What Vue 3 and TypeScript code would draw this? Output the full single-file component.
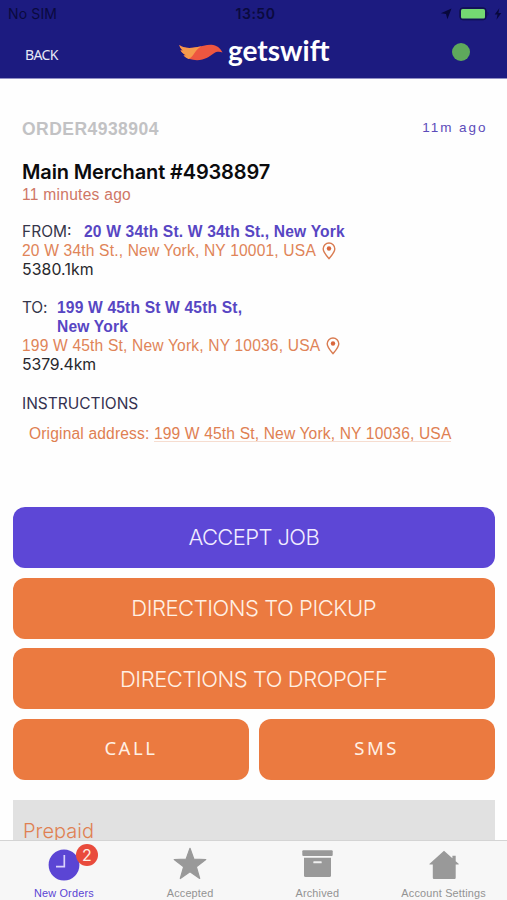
<script setup lang="ts">
interface Tab {
  id: 'new' | 'accepted' | 'archived' | 'account'
  label: string
  badge?: number
}

const tabs: Tab[] = [
  { id: 'new', label: 'New Orders', badge: 2 },
  { id: 'accepted', label: 'Accepted' },
  { id: 'archived', label: 'Archived' },
  { id: 'account', label: 'Account Settings' },
]
</script>

<template>
  <div class="phone">
    <header class="header">
      <div class="status">
        <span class="carrier">No SIM</span>
        <span class="clock">13:50</span>
        <div class="indicators">
          <svg class="locate" viewBox="0 0 12 12"><path d="M11.500.5 7.400 11.300 6 6.100.8 5.200z" fill="#08083c" /></svg>
          <svg class="battery" viewBox="0 0 30 14">
            <rect x=".8" y=".8" width="26.400" height="12" rx="3" fill="#15155c" stroke="#10104c" />
            <rect x="2" y="2" width="24" height="9.600" rx="1.600" fill="#74d972" />
            <path d="M28.600 4.600c1 .6 1 3.800 0 4.400z" fill="#10104c" />
          </svg>
          <svg class="bolt" viewBox="0 0 8 12"><path d="M5.300.3.7 6.600h2.800L2.500 11.700 7.300 5H4.400z" fill="#08083c" /></svg>
        </div>
      </div>
      <div class="nav">
        <span class="back">BACK</span>
        <div class="brand">
          <svg class="wing" viewBox="0 0 44 17">
            <path d="M.3 1C5 4.500 11 4.300 17 3.300 23 2.300 27 .5 32.500.7 37.500 1 41.500 4 43.500 8.600 40.500 7.400 37.500 7.700 35 9.300 30 12.600 26 16.200 18 16.200 12.500 16.200 8 14.600 4.500 11.600L7 11.300C4.500 10 2.500 8.300 1.500 6.200L3.800 6.700C2 5 .8 3 .3 1z" fill="#ee5640" />
            <path d="M.3 1C5 4.500 11 4.300 17 3.300 19.500 3 21 2.700 22.500 2.300 18.500 4.300 16.500 7.500 14.500 10.500 13 12.700 11.500 14 9.500 14.900 7.500 14.100 6 13 4.500 11.600L7 11.300C4.500 10 2.500 8.300 1.500 6.200L3.800 6.700C2 5 .8 3 .3 1z" fill="#f59a4c" />
          </svg>
          <span class="wordmark">getswift</span>
        </div>
        <span class="online"></span>
      </div>
    </header>

    <main class="content">
      <section class="details">
        <div class="order-row">
          <span class="order">ORDER4938904</span>
          <span class="age">11m ago</span>
        </div>
        <h1 class="merchant">Main Merchant #4938897</h1>
        <p class="ago">11 minutes ago</p>

        <div class="stop">
          <div class="stop-head">
            <span class="label from">FROM:</span>
            <strong class="place">20 W 34th St. W 34th St., New York</strong>
          </div>
          <div class="address">
            <span>20 W 34th St., New York, NY 10001, USA</span>
            <svg class="pin" viewBox="0 0 14 18"><path d="M7 1a5.800 5.800 0 0 0-5.800 5.800C1.200 10.300 4.500 13.700 7 16.600c2.500-2.900 5.800-6.300 5.800-9.800A5.800 5.800 0 0 0 7 1z" fill="none" stroke="#d97b50" stroke-width="1.400" /><circle cx="7" cy="6.500" r="2.200" fill="#d9663c" /></svg>
          </div>
          <p class="distance">5380.1km</p>
        </div>

        <div class="stop">
          <div class="stop-head">
            <span class="label to">TO:</span>
            <strong class="place">199 W 45th St W 45th St,<br />New York</strong>
          </div>
          <div class="address">
            <span>199 W 45th St, New York, NY 10036, USA</span>
            <svg class="pin" viewBox="0 0 14 18"><path d="M7 1a5.800 5.800 0 0 0-5.800 5.800C1.200 10.300 4.500 13.700 7 16.600c2.500-2.900 5.800-6.300 5.800-9.800A5.800 5.800 0 0 0 7 1z" fill="none" stroke="#d97b50" stroke-width="1.400" /><circle cx="7" cy="6.500" r="2.200" fill="#d9663c" /></svg>
          </div>
          <p class="distance second">5379.4km</p>
        </div>

        <h2 class="instructions">INSTRUCTIONS</h2>
        <p class="note">Original address: <span class="link">199 W 45th St, New York, NY 10036, USA</span></p>
      </section>

      <section class="actions">
        <button class="btn accept">ACCEPT JOB</button>
        <button class="btn">DIRECTIONS TO PICKUP</button>
        <button class="btn dropoff">DIRECTIONS TO DROPOFF</button>
        <div class="pair">
          <button class="btn small">CALL</button>
          <button class="btn small">SMS</button>
        </div>
      </section>

      <section class="payment"><span class="prepaid">Prepaid</span></section>
    </main>

    <nav class="tabs">
      <div v-for="tab in tabs" :key="tab.id" class="tab" :class="tab.id">
        <div class="icon">
          <svg v-if="tab.id === 'new'" width="32" height="32" viewBox="0 0 32 32">
            <circle cx="16" cy="16" r="15.400" fill="#5b45d4" />
            <path d="M16.300 6v11.600H8" fill="none" stroke="#d9d1fb" stroke-width="1.700" />
          </svg>
          <svg v-else-if="tab.id === 'accepted'" width="34" height="33" viewBox="0 0 34 33">
            <path d="m17 1.300 3.900 10.900 11.900.3-9.400 7.300 3.300 11.700L17 24.800 7.300 31.500l3.300-11.700-9.400-7.300 11.900-.3z" fill="#999" stroke="#999" stroke-width="1.200" stroke-linejoin="round" />
          </svg>
          <svg v-else-if="tab.id === 'archived'" width="31" height="28" viewBox="0 0 31 28">
            <rect x=".3" y=".3" width="30.400" height="5.700" rx="1" fill="#999" />
            <path d="M2 7.800h27v17.700a1.500 1.500 0 0 1-1.500 1.500h-24A1.500 1.500 0 0 1 2 25.500z" fill="#999" />
            <rect x="11.300" y="11.300" width="8.400" height="2" rx=".6" fill="#f0f0f0" />
          </svg>
          <svg v-else width="30" height="30" viewBox="0 0 30 30">
            <path d="M15 .8.600 13.700c-.4.500-.2.800.4.800h2.800v13c0 1 .5 1.500 1.500 1.500h19.900c1 0 1.500-.5 1.500-1.500v-13h2.500c.6 0 .8-.3.400-.8l-2.900-2.500V5.800h-3.300v2.500z" fill="#999" />
          </svg>
          <span v-if="tab.badge" class="badge">{{ tab.badge }}</span>
        </div>
        <span class="tab-label">{{ tab.label }}</span>
      </div>
    </nav>
  </div>
</template>

<style>
body { background: #fff; }
</style>

<style scoped>
* { box-sizing: border-box; }
.phone {
  width: 507px;
  height: 900px;
  display: flex;
  flex-direction: column;
  overflow: hidden;
  background: #fefefe;
  font-family: "Liberation Sans", Arial, sans-serif;
  white-space: nowrap;
}
h1, h2, p { margin: 0; font-weight: 400; }
svg { display: block; flex: none; }

.header {
  flex: none;
  height: 79px;
  background: #1c1b80;
  border-bottom: 1px solid #9190c4;
}
.status {
  height: 28px;
  padding: 0 4px 0 8px;
  display: grid;
  grid-template-columns: 1fr auto 1fr;
  align-items: center;
  font: 14px/28px Inter, sans-serif;
  color: #0a0a3e;
}
.carrier { letter-spacing: 0.15px; }
.clock { font-weight: 600; letter-spacing: 0.5px; }
.indicators { display: flex; justify-content: flex-end; align-items: center; margin-right: 1px; }
.locate { width: 12px; height: 12px; margin-right: 7px; }
.battery { width: 30px; height: 14px; margin-right: 5px; }
.bolt { width: 8px; height: 12px; }
.nav {
  height: 50px;
  padding: 0 37px 0 25px;
  display: grid;
  grid-template-columns: 154px 1fr auto;
  align-items: center;
}
.back { padding-top: 4px; font: 14px/20px "Noto Sans", sans-serif; letter-spacing: -0.600px; color: #e8e8f6; }
.brand { display: flex; align-items: center; }
.wing { width: 44px; height: 17px; margin: 0 5px 2px 0; }
.wordmark { font: 700 28px/40px Lato, sans-serif; color: #fff; height: 46px; }
.online { width: 18px; height: 18px; border-radius: 50%; background: #5ea95c; margin-bottom: 3px; }

.content { flex: 1; min-height: 0; overflow: hidden; padding: 40px 12.5px 0 13px; }
.details { height: 387.600px; padding: 0 8px 0 9px; font-size: 15.600px; line-height: 19px; letter-spacing: 0.170px; color: #28282c; }
.order-row { display: flex; justify-content: space-between; height: 20px; }
.order { font-weight: 700; font-size: 17.500px; line-height: 21px; letter-spacing: 0.460px; color: #c2c2c4; }
.age { margin-right: -1px; font-size: 13.500px; line-height: 18px; letter-spacing: 1.950px; color: #5c4cba; }
.merchant { margin-top: 20px; font: 600 20px/26px Inter, sans-serif; letter-spacing: -0.140px; color: #0b0b0d; }
.ago { line-height: 20px; letter-spacing: 0.250px; color: #cf7665; }
.stop { margin-top: 17px; }
.stop + .stop { margin-top: 19px; }
.stop-head { display: flex; align-items: flex-start; }
.label { font-family: Inter, sans-serif; font-size: 15.500px; letter-spacing: 0; color: #36364a; }
.from { width: 62px; }
.to { width: 35px; letter-spacing: -0.200px; }
.place { color: #5746c3; }
.address { display: flex; align-items: center; height: 19px; color: #e08458; }
.pin { width: 14px; height: 18px; margin-left: 6px; }
.distance { font-family: Inter, sans-serif; font-size: 15.800px; letter-spacing: 0.100px; }
.second { letter-spacing: -0.100px; }
.instructions { margin-top: 20px; font: 15.500px/19px Inter, sans-serif; letter-spacing: 0; color: #343150; }
.note { margin: 11px 0 0 7px; letter-spacing: 0.150px; color: #df8052; }
.link { border-bottom: 1px solid #f6ddd0; display: inline-block; height: 18px; }

.actions { display: flex; flex-direction: column; gap: 9.940px; }
.btn {
  height: 61px;
  padding: 0;
  border: 0;
  border-radius: 12px;
  background: #eb7a40;
  color: #fff0e4;
  font: 300 22px/61px Inter, sans-serif;
  letter-spacing: -0.450px;
  text-align: center;
}
.accept { background: #5d47d6; color: #f1edff; letter-spacing: -0.600px; }
.dropoff { padding-top: 1px; }
.pair { display: grid; grid-template-columns: 1fr 1fr; gap: 10px; }
.small { padding-bottom: 3px; font: 18.500px/58px "Noto Sans", sans-serif; letter-spacing: 2.500px; }
.payment { margin-top: 20px; height: 80px; padding: 18px 10px; background: #e1e1e1; }
.prepaid { font: 300 20px/26px Inter, sans-serif; color: #df8052; }

.tabs {
  flex: none;
  height: 60px;
  display: grid;
  grid-template-columns: repeat(4, 1fr);
  background: #f7f7f7;
  border-top: 1px solid #d4d4d4;
}
.tab { display: flex; flex-direction: column; align-items: center; color: #939393; }
.new { padding-left: 1px; }
.archived { padding-left: 1px; }
.icon { position: relative; height: 46px; padding-top: 8px; }
.accepted .icon { padding-top: 6px; }
.archived .icon { padding-top: 9px; }
.account .icon { padding-top: 9px; }
.tab-label { font-size: 10.900px; line-height: 12px; letter-spacing: 0.180px; }
.new .tab-label { color: #5b45d4; }
.badge {
  position: absolute;
  top: 3px;
  left: 28px;
  width: 22px;
  height: 22px;
  border-radius: 50%;
  background: #e94b3c;
  color: #fff0e4;
  font: 16px/22px Inter, sans-serif;
  text-align: center;
}
</style>
